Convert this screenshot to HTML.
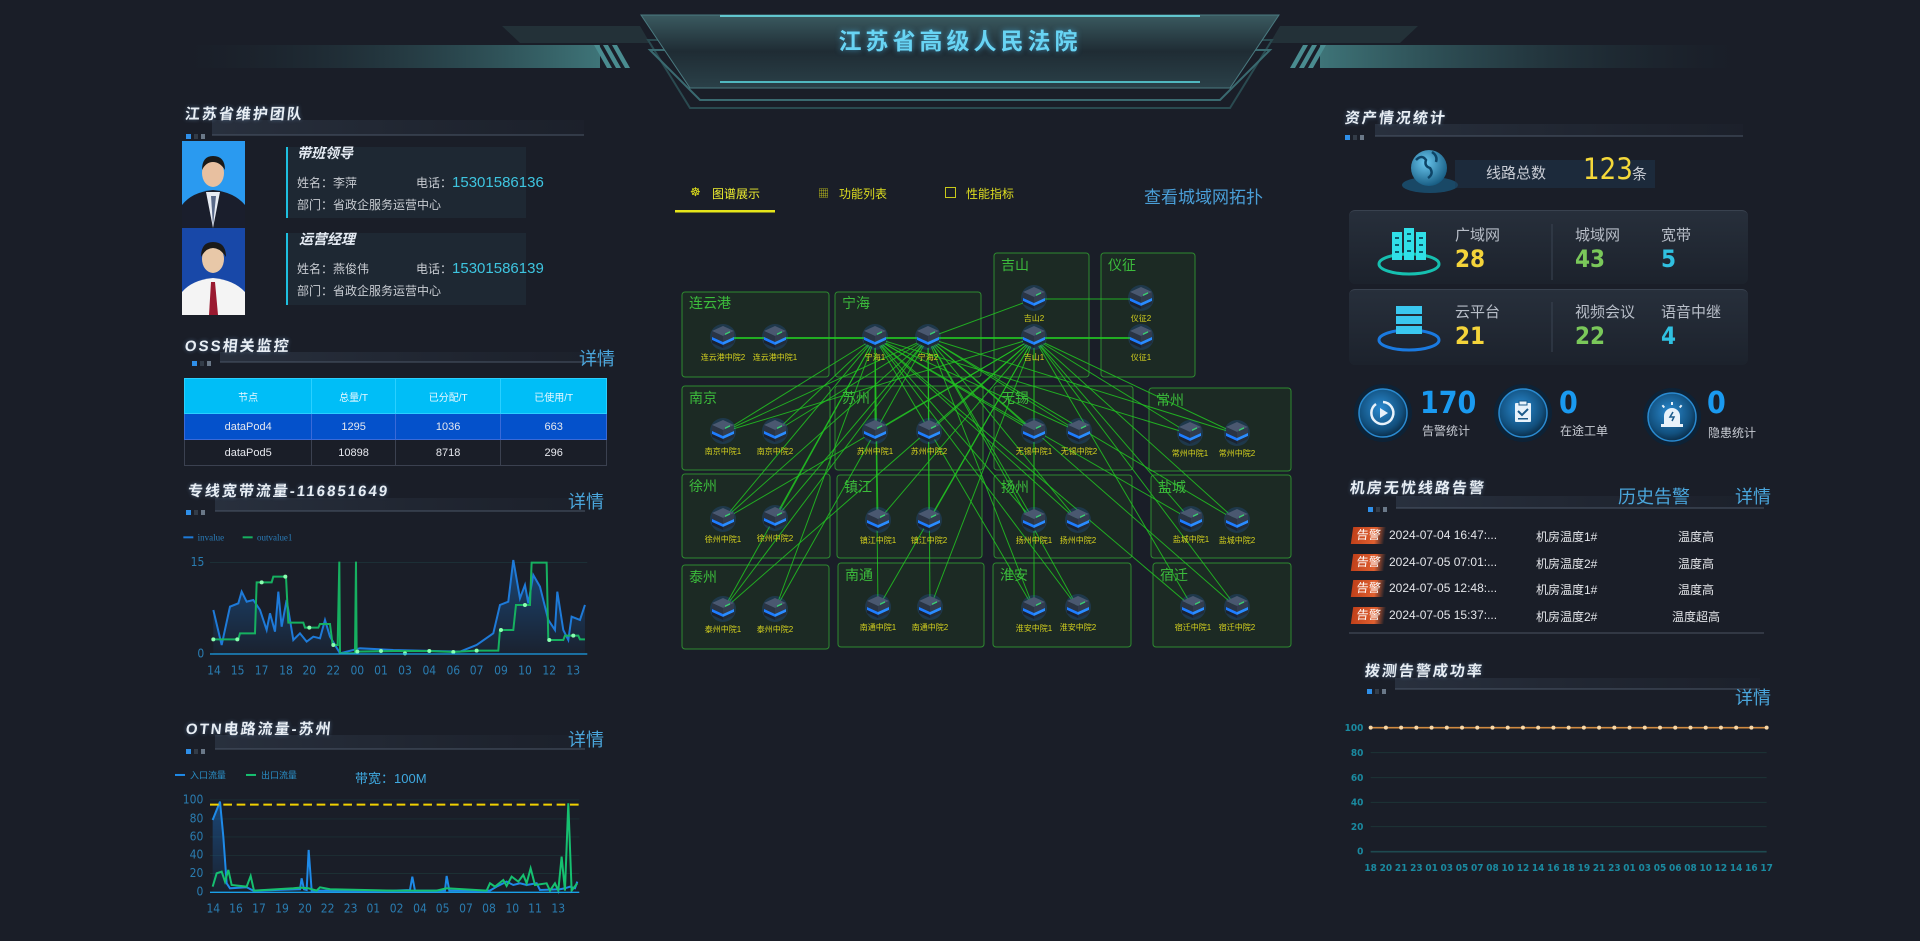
<!DOCTYPE html>
<html><head><meta charset="utf-8">
<style>
*{margin:0;padding:0;box-sizing:border-box}
body{width:1920px;height:941px;background:#1a1e28;overflow:hidden;position:relative;font-family:"Liberation Sans","Noto Sans CJK SC",sans-serif;color:#fff}
.a{position:absolute;white-space:nowrap}
.t{position:absolute;font-weight:bold;font-size:15px;letter-spacing:2px;color:#e8eef4;text-shadow:0 0 4px rgba(150,200,255,.4);transform:skewX(-6deg);white-space:nowrap}
.xq{position:absolute;color:#4aa6dc;font-size:18px;white-space:nowrap}
.lbl{color:#c8ccd2;font-size:12px}
.tb{position:absolute;left:184px;top:378px;width:423px;border-collapse:collapse;font-size:11px;text-align:center}
.tb td{height:26px;border:1px solid #3b4150;color:#e6e8ee}
.tb tr.h td{height:35px;background:#00bef7;border-color:#2ad0ff;color:#e8f8ff;font-size:10px}
.tb tr.r1 td{background:#0451cb;border-color:#3a6ad8}
.card{position:absolute;left:1349px;width:399px;border-radius:6px;background:linear-gradient(180deg,#272f3b,#1c222c);border-top:1px solid #39424f}
.cl{color:#b8bec8;font-size:15px}
.num{font-size:24px;font-weight:bold;font-family:"DejaVu Sans Condensed","Liberation Sans",sans-serif}
.row{position:absolute;left:1352px;width:420px;height:18px;font-size:12px;color:#e4e6ea}
.row span{position:absolute;white-space:nowrap;top:1px}
.bd{position:absolute;left:0;width:33px;height:17px;background:linear-gradient(90deg,#c0401a,#e06030 70%,rgba(224,96,48,0));color:#fff;font-size:12px;line-height:17px;text-align:center;transform:skewX(-8deg);white-space:nowrap}
</style></head><body>
<div class="card" style="top:210px;height:74px"></div>
<div class="card" style="top:289px;height:76px"></div>
<svg class="a" style="left:0;top:0" width="1920" height="941" viewBox="0 0 1920 941">
<defs>
<linearGradient id="lb" x1="0" x2="1"><stop offset="0" stop-color="#1e3038" stop-opacity="0"/><stop offset="1" stop-color="#3e7478"/></linearGradient>
<linearGradient id="rb" x1="1" x2="0"><stop offset="0" stop-color="#1e3038" stop-opacity="0"/><stop offset="1" stop-color="#3e7478"/></linearGradient>
<linearGradient id="hp" x1="0" y1="0" x2="0" y2="1"><stop offset="0" stop-color="#3a5a60"/><stop offset=".5" stop-color="#1f2c34"/><stop offset="1" stop-color="#2a4048"/></linearGradient>
<linearGradient id="ul" x1="0" x2="1"><stop offset="0" stop-color="#2a3240" stop-opacity=".9"/><stop offset="1" stop-color="#232a36" stop-opacity=".2"/></linearGradient>
<linearGradient id="ar1" x1="0" y1="0" x2="0" y2="1"><stop offset="0" stop-color="#1a68b8" stop-opacity=".55"/><stop offset="1" stop-color="#1a68b8" stop-opacity=".05"/></linearGradient>
<radialGradient id="cg" cx=".45" cy=".4" r=".6"><stop offset="0" stop-color="#2a8ad0"/><stop offset=".75" stop-color="#12507e"/><stop offset="1" stop-color="#0b2e4a"/></radialGradient>
<radialGradient id="gl" cx=".4" cy=".35" r=".7"><stop offset="0" stop-color="#6ac8f0"/><stop offset="1" stop-color="#14587e"/></radialGradient>
<symbol id="nd" viewBox="0 0 24 24">
<polygon points="12,1 23,6 12,11 1,6" fill="#4a5870"/>
<polygon points="1,6 12,11 12,17 1,12" fill="#2a3444"/>
<polygon points="23,6 12,11 12,17 23,12" fill="#323c4e"/>
<polygon points="1,12 12,17 12,20 1,15" fill="#1e7cff"/>
<polygon points="23,12 12,17 12,20 23,15" fill="#2a8cff"/>
<polygon points="1,15 12,20 12,23 1,18" fill="#1a2230"/>
<polygon points="23,15 12,20 12,23 23,18" fill="#222c3a"/>
<rect x="14" y="8" width="5" height="1.5" fill="#3ad070" transform="skewY(-25) translate(0,7)"/>
</symbol>
</defs>
<polygon points="502,26 640,26 650,43 520,43" fill="#2c4448" opacity=".5"/>
<polygon points="1418,26 1280,26 1270,43 1400,43" fill="#2c4448" opacity=".5"/>
<rect x="184" y="45" width="416" height="23" fill="url(#lb)"/>
<rect x="1320" y="45" width="420" height="23" fill="url(#rb)"/>
<g fill="#4a8c90"><polygon points="594,45 599,45 612,68 607,68"/><polygon points="603,45 608,45 621,68 616,68"/><polygon points="612,45 617,45 630,68 625,68"/>
<polygon points="1326,45 1321,45 1308,68 1313,68"/><polygon points="1317,45 1312,45 1299,68 1304,68"/><polygon points="1308,45 1303,45 1290,68 1295,68"/></g>
<polygon points="648,40 690,108 1230,108 1272,40" fill="none" stroke="#2a4a50" stroke-width="2"/>
<polygon points="650,50 700,100 1220,100 1270,50" fill="none" stroke="#3a6a70" stroke-width="2"/>
<polygon points="641,15 1279,15 1230,88 690,88" fill="url(#hp)" stroke="#4a7a80"/>
<line x1="720" y1="16" x2="1200" y2="16" stroke="#6ae0e8" stroke-width="2" opacity=".8"/>
<line x1="720" y1="82" x2="1200" y2="82" stroke="#5ad8e0" stroke-width="2" opacity=".8"/>
<g>
<rect x="212" y="120" width="372" height="15" fill="url(#ul)"/><line x1="212" y1="135" x2="584" y2="135" stroke="#4a5566"/>
<rect x="220" y="352" width="390" height="10" fill="url(#ul)"/><line x1="220" y1="362" x2="610" y2="362" stroke="#4a5566"/>
<rect x="215" y="498" width="370" height="13" fill="url(#ul)"/><line x1="215" y1="511" x2="585" y2="511" stroke="#4a5566"/>
<rect x="215" y="735" width="370" height="14" fill="url(#ul)"/><line x1="215" y1="749" x2="585" y2="749" stroke="#4a5566"/>
<rect x="1375" y="124" width="368" height="12" fill="url(#ul)"/><line x1="1375" y1="136" x2="1743" y2="136" stroke="#4a5566"/>
<rect x="1396" y="496" width="368" height="12" fill="url(#ul)"/><line x1="1396" y1="508" x2="1764" y2="508" stroke="#4a5566"/>
<rect x="1395" y="678" width="365" height="11" fill="url(#ul)"/><line x1="1395" y1="689" x2="1760" y2="689" stroke="#4a5566"/>
</g>
<g>
<g transform="translate(186,134)"><rect width="5" height="5" fill="#2f8fe8"/><rect x="8" width="4" height="5" fill="#333c48"/><rect x="15" width="4" height="5" fill="#6a7888"/></g>
<g transform="translate(192,361)"><rect width="5" height="5" fill="#2f8fe8"/><rect x="8" width="4" height="5" fill="#333c48"/><rect x="15" width="4" height="5" fill="#6a7888"/></g>
<g transform="translate(186,510)"><rect width="5" height="5" fill="#2f8fe8"/><rect x="8" width="4" height="5" fill="#333c48"/><rect x="15" width="4" height="5" fill="#6a7888"/></g>
<g transform="translate(186,749)"><rect width="5" height="5" fill="#2f8fe8"/><rect x="8" width="4" height="5" fill="#333c48"/><rect x="15" width="4" height="5" fill="#6a7888"/></g>
<g transform="translate(1345,135)"><rect width="5" height="5" fill="#2f8fe8"/><rect x="8" width="4" height="5" fill="#333c48"/><rect x="15" width="4" height="5" fill="#6a7888"/></g>
<g transform="translate(1368,507)"><rect width="5" height="5" fill="#2f8fe8"/><rect x="8" width="4" height="5" fill="#333c48"/><rect x="15" width="4" height="5" fill="#6a7888"/></g>
<g transform="translate(1367,689)"><rect width="5" height="5" fill="#2f8fe8"/><rect x="8" width="4" height="5" fill="#333c48"/><rect x="15" width="4" height="5" fill="#6a7888"/></g>
</g>
<rect x="182" y="141" width="63" height="87" fill="#2a9af0"/>
<path d="M182,205 Q192,192 213,190 Q234,192 245,205 L245,228 L182,228Z" fill="#1a1e2c"/>
<path d="M206,192 L213,228 L220,192Z" fill="#e8ecf4"/><path d="M211,196 L213,226 L216,196Z" fill="#5a6a8a"/>
<ellipse cx="213" cy="173" rx="11" ry="14" fill="#e8c0a0"/><path d="M202,170 Q202,156 213,156 Q225,156 225,170 Q220,162 213,162 Q206,162 202,170Z" fill="#1a1a1a"/>
<rect x="182" y="228" width="63" height="87" fill="#1848a8"/>
<path d="M182,292 Q192,280 213,278 Q234,280 245,292 L245,315 L182,315Z" fill="#f4f4f4"/>
<path d="M211,282 L209,315 L218,315 L215,282Z" fill="#9a1a30"/>
<ellipse cx="213" cy="259" rx="11" ry="14" fill="#e8c8a8"/><path d="M201,257 Q201,242 213,242 Q226,242 226,257 Q220,248 213,248 Q206,248 201,257Z" fill="#1a1a1a"/>
<rect x="286" y="147" width="240" height="71" fill="#1f2a36" opacity=".8"/><rect x="286" y="147" width="2" height="71" fill="#1ec0e0"/>
<rect x="286" y="233" width="240" height="72" fill="#1f2a36" opacity=".8"/><rect x="286" y="233" width="2" height="72" fill="#1ec0e0"/>
<g transform="translate(160,470) scale(0.3333)">
<line x1="150" y1="277" x2="1282" y2="277" stroke="#1f3a3e" stroke-width="2"/>
<polygon fill="url(#ar1)" points="160,420 185,525 210,410 235,400 245,365 260,395 280,390 300,420 320,480 330,430 345,485 355,365 365,470 380,390 400,510 420,490 440,515 460,500 480,505 495,450 510,500 540,550 600,535 700,540 900,545 950,525 1000,490 1020,405 1045,395 1060,270 1080,385 1095,345 1105,400 1120,315 1140,350 1165,450 1185,480 1192,365 1210,480 1225,510 1235,440 1260,450 1275,405 1275,552 160,552"/>
<polyline fill="none" stroke="#1e7ad8" stroke-width="6" points="160,420 185,525 210,410 235,400 245,365 260,395 280,390 300,420 320,480 330,430 345,485 355,365 365,470 380,390 400,510 420,490 440,515 460,500 480,505 495,450 510,500 540,550 600,535 700,540 900,545 950,525 1000,490 1020,405 1045,395 1060,270 1080,385 1095,345 1105,400 1120,315 1140,350 1165,450 1185,480 1192,365 1210,480 1225,510 1235,440 1260,450 1275,405"/>
<polyline fill="none" stroke="#16b060" stroke-width="6" points="160,508 235,508 240,490 285,490 290,337 335,337 340,320 378,320 385,458 430,458 435,473 475,473 480,462 510,462 518,525 533,525 538,275 540,550 585,550 588,275 590,545 700,543 810,543 880,546 950,542 1015,542 1020,480 1060,480 1068,405 1110,405 1115,278 1160,278 1165,510 1210,510 1215,497 1255,497 1260,508 1275,508"/>
<g fill="#8affb0"><circle cx="160" cy="508" r="6"/><circle cx="232" cy="508" r="6"/><circle cx="305" cy="337" r="6"/><circle cx="376" cy="320" r="6"/><circle cx="448" cy="473" r="6"/><circle cx="520" cy="525" r="6"/><circle cx="592" cy="545" r="6"/><circle cx="663" cy="543" r="6"/><circle cx="735" cy="550" r="6"/><circle cx="808" cy="543" r="6"/><circle cx="880" cy="546" r="6"/><circle cx="950" cy="542" r="6"/><circle cx="1023" cy="480" r="6"/><circle cx="1095" cy="405" r="6"/><circle cx="1168" cy="510" r="6"/><circle cx="1240" cy="497" r="6"/></g>
<line x1="150" y1="552" x2="1282" y2="552" stroke="#1aa0e8" stroke-width="4"/>
<g fill="#2a7cb0" font-size="36" font-family="DejaVu Sans Condensed,Liberation Sans,sans-serif"><text x="92" y="288">15</text><text x="112" y="563">0</text>
<g text-anchor="middle"><text x="162" y="614">14</text><text x="233" y="614">15</text><text x="305" y="614">17</text><text x="378" y="614">18</text><text x="448" y="614">20</text><text x="520" y="614">22</text><text x="592" y="614">00</text><text x="663" y="614">01</text><text x="735" y="614">03</text><text x="808" y="614">04</text><text x="880" y="614">06</text><text x="950" y="614">07</text><text x="1023" y="614">09</text><text x="1095" y="614">10</text><text x="1168" y="614">12</text><text x="1240" y="614">13</text></g></g>
<line x1="70" y1="202" x2="100" y2="202" stroke="#1e7ad8" stroke-width="6"/><line x1="248" y1="202" x2="278" y2="202" stroke="#16b060" stroke-width="6"/>
<g fill="#2a7cb8" font-size="27" font-family="Liberation Serif,serif"><text x="113" y="212">invalue</text><text x="291" y="212">outvalue1</text></g>
</g>
<g transform="translate(160,470) scale(0.3333)">
<g stroke="#1d3638" stroke-width="2"><line x1="150" y1="990" x2="1258" y2="990"/><line x1="150" y1="1047" x2="1258" y2="1047"/><line x1="150" y1="1101" x2="1258" y2="1101"/><line x1="150" y1="1156" x2="1258" y2="1156"/><line x1="150" y1="1211" x2="1258" y2="1211"/></g>
<polygon fill="url(#ar1)" points="158,1050 180,995 190,1100 200,1240 210,1255 210,1267 158,1267"/>
<polyline fill="none" stroke="#1e8ae8" stroke-width="6" points="158,1050 180,995 190,1100 200,1240 210,1255 260,1252 280,1262 420,1258 425,1225 432,1258 440,1260 446,1140 455,1262 700,1262 750,1260 757,1220 765,1262 855,1262 860,1218 868,1262 990,1262 1010,1250 1040,1235 1060,1245 1080,1240 1100,1245 1130,1240 1140,1260 1200,1258 1215,1255 1230,1250 1245,1255 1252,1235"/>
<polyline fill="none" stroke="#16c070" stroke-width="6" points="158,1250 170,1210 185,1205 195,1235 205,1200 215,1245 260,1250 272,1218 282,1262 400,1255 420,1253 445,1255 470,1262 480,1252 510,1258 700,1262 830,1262 860,1255 980,1262 990,1240 1005,1250 1030,1230 1040,1248 1055,1220 1075,1235 1090,1215 1100,1240 1112,1195 1125,1245 1160,1240 1170,1262 1185,1240 1195,1262 1205,1160 1215,1262 1225,1000 1235,1262 1252,1240"/>
<line x1="150" y1="1004" x2="1258" y2="1004" stroke="#f0d000" stroke-width="6" stroke-dasharray="26,14"/>
<line x1="150" y1="1267" x2="1258" y2="1267" stroke="#1aa0e8" stroke-width="4"/>
<g fill="#2a7cb0" font-size="36" font-family="DejaVu Sans Condensed,Liberation Sans,sans-serif"><g text-anchor="end"><text x="130" y="1000">100</text><text x="130" y="1057">80</text><text x="130" y="1111">60</text><text x="130" y="1166">40</text><text x="130" y="1221">20</text><text x="130" y="1277">0</text></g>
<g text-anchor="middle"><text x="160" y="1328">14</text><text x="228" y="1328">16</text><text x="297" y="1328">17</text><text x="366" y="1328">19</text><text x="435" y="1328">20</text><text x="503" y="1328">22</text><text x="572" y="1328">23</text><text x="640" y="1328">01</text><text x="710" y="1328">02</text><text x="780" y="1328">04</text><text x="848" y="1328">05</text><text x="918" y="1328">07</text><text x="987" y="1328">08</text><text x="1057" y="1328">10</text><text x="1125" y="1328">11</text><text x="1195" y="1328">13</text></g></g>
<line x1="45" y1="915" x2="75" y2="915" stroke="#1e8ae8" stroke-width="6"/><line x1="258" y1="915" x2="288" y2="915" stroke="#16c070" stroke-width="6"/>
<g fill="#2a90c8" font-size="27"><text x="90" y="925">入口流量</text><text x="303" y="925">出口流量</text></g>
</g>
<g transform="translate(1330,650) scale(0.3333)">
<g stroke="#1d3436" stroke-width="3"><line x1="122" y1="308" x2="1310" y2="308"/><line x1="122" y1="383" x2="1310" y2="383"/><line x1="122" y1="457" x2="1310" y2="457"/><line x1="122" y1="530" x2="1310" y2="530"/></g>
<line x1="122" y1="605" x2="1310" y2="605" stroke="#1e4a50" stroke-width="5"/>
<line x1="122" y1="233" x2="1310" y2="233" stroke="#d08a40" stroke-width="5"/>
<g id="pts" fill="#f8d8a8"></g>
<g fill="#1a8aa0" font-size="30" font-weight="bold" font-family="DejaVu Sans Condensed,Liberation Sans,sans-serif"><g text-anchor="end"><text x="100" y="243">100</text><text x="100" y="318">80</text><text x="100" y="393">60</text><text x="100" y="467">40</text><text x="100" y="540">20</text><text x="100" y="613">0</text></g>
<g id="xl" text-anchor="middle"></g></g>
</g>
<g fill="#1d2b24" fill-opacity=".9" stroke="#2e8a30" stroke-width="1">
<rect x="682" y="292" width="147" height="85" rx="3"/><rect x="835" y="292" width="146" height="85" rx="3"/>
<rect x="994" y="253" width="95" height="124" rx="3"/><rect x="1101" y="253" width="94" height="124" rx="3"/>
<rect x="682" y="386" width="148" height="84" rx="3"/><rect x="835" y="386" width="148" height="84" rx="3"/><rect x="994" y="386" width="139" height="84" rx="3"/><rect x="1149" y="388" width="142" height="83" rx="3"/>
<rect x="682" y="474" width="148" height="84" rx="3"/><rect x="837" y="475" width="145" height="83" rx="3"/><rect x="994" y="475" width="138" height="83" rx="3"/><rect x="1151" y="475" width="140" height="83" rx="3"/>
<rect x="682" y="565" width="147" height="84" rx="3"/><rect x="838" y="563" width="146" height="84" rx="3"/><rect x="993" y="563" width="138" height="84" rx="3"/><rect x="1153" y="563" width="138" height="84" rx="3"/>
</g>
<g id="edges" stroke="#22c422" stroke-width="1" stroke-opacity=".85">
<line x1="723" y1="338" x2="1141" y2="338" stroke-width="2"/><line x1="1034" y1="299" x2="1141" y2="299"/><line x1="928" y1="338" x2="1034" y2="299"/>
</g>
<g id="nodes"></g>
<g fill="#3cbc3c" font-size="14"><text x="689" y="308">连云港</text><text x="842" y="308">宁海</text><text x="1001" y="270">吉山</text><text x="1108" y="270">仪征</text>
<text x="689" y="403">南京</text><text x="842" y="403">苏州</text><text x="1001" y="403">无锡</text><text x="1156" y="405">常州</text>
<text x="689" y="491">徐州</text><text x="844" y="492">镇江</text><text x="1001" y="492">扬州</text><text x="1158" y="492">盐城</text>
<text x="689" y="582">泰州</text><text x="845" y="580">南通</text><text x="1000" y="580">淮安</text><text x="1160" y="580">宿迁</text></g>
<g id="nl" fill="#d6d21e" font-size="8" text-anchor="middle"></g>
<ellipse cx="1430" cy="185" rx="28" ry="8" fill="#1a5a80" opacity=".7"/>
<circle cx="1429" cy="168" r="18" fill="url(#gl)"/><path d="M1416,160 q6,-6 10,0 q-2,6 4,8 q4,6 -2,10 M1432,152 q6,4 4,10" stroke="#0e4466" stroke-width="2.5" fill="none"/>
<rect x="1455" y="160" width="200" height="28" fill="#1f3a52" opacity=".45"/>
<ellipse cx="1409" cy="264" rx="30" ry="10" fill="none" stroke="#16c0b0" stroke-width="3"/>
<g fill="#30e0e8"><rect x="1392" y="232" width="10" height="28"/><rect x="1404" y="228" width="10" height="32"/><rect x="1416" y="232" width="10" height="28"/></g>
<g fill="#0a5a6a"><rect x="1395" y="237" width="4" height="2"/><rect x="1407" y="233" width="4" height="2"/><rect x="1419" y="237" width="4" height="2"/><rect x="1395" y="244" width="4" height="2"/><rect x="1407" y="240" width="4" height="2"/><rect x="1419" y="244" width="4" height="2"/><rect x="1395" y="251" width="4" height="2"/><rect x="1407" y="250" width="4" height="2"/><rect x="1419" y="251" width="4" height="2"/></g>
<ellipse cx="1409" cy="340" rx="30" ry="10" fill="none" stroke="#1a7ae0" stroke-width="3"/>
<g fill="#3ac8f0"><rect x="1396" y="306" width="26" height="8"/><rect x="1396" y="316" width="26" height="8"/><rect x="1396" y="326" width="26" height="8"/></g>
<line x1="1552" y1="224" x2="1552" y2="280" stroke="#3a4452"/><line x1="1552" y1="302" x2="1552" y2="352" stroke="#3a4452"/>
<g>
<circle cx="1383" cy="413" r="29" fill="#0d2236"/><circle cx="1383" cy="413" r="24" fill="url(#cg)" stroke="#2a8ad0" stroke-width="1.5"/>
<path d="M1376,404 A11,11 0 1 0 1383,402" fill="none" stroke="#e8f2fa" stroke-width="2.5"/><polygon points="1380,408 1388,413 1380,418" fill="#e8f2fa"/>
<circle cx="1523" cy="413" r="29" fill="#0d2236"/><circle cx="1523" cy="413" r="24" fill="url(#cg)" stroke="#2a8ad0" stroke-width="1.5"/>
<rect x="1515" y="403" width="16" height="19" rx="1" fill="#e8f2fa"/><rect x="1519" y="401" width="8" height="4" fill="#e8f2fa" stroke="#1a5a8a"/><path d="M1518,411 l4,4 l6,-6" stroke="#1a5a8a" stroke-width="2" fill="none"/><rect x="1518" y="418" width="10" height="1.5" fill="#1a5a8a"/>
<circle cx="1672" cy="417" r="29" fill="#0d2236"/><circle cx="1672" cy="417" r="24" fill="url(#cg)" stroke="#2a8ad0" stroke-width="1.5"/>
<path d="M1664,424 v-8 a8,8 0 0 1 16,0 v8z" fill="#e8f2fa"/><rect x="1661" y="424" width="22" height="3" fill="#e8f2fa"/><path d="M1673,412 l-3,5 h4 l-2,4" stroke="#1a5a8a" stroke-width="1.5" fill="none"/>
<g fill="#e8f2fa"><rect x="1671" y="402" width="2" height="3"/><rect x="1662" y="405" width="2" height="3" transform="rotate(-40 1663 406)"/><rect x="1680" y="405" width="2" height="3" transform="rotate(40 1681 406)"/></g>
</g>
<line x1="1349" y1="633" x2="1764" y2="633" stroke="#4a5260"/>
<rect x="675" y="210" width="100" height="2.5" fill="#e6e61a"/>
</svg>

<div class="a" style="left:0;top:22px;width:1920px;text-align:center;font-size:23px;font-weight:bold;letter-spacing:4px;color:#68d4f4;text-shadow:0 0 6px rgba(80,200,255,.6)">江苏省高级人民法院</div>

<div class="t" style="left:185px;top:103px">江苏省维护团队</div>
<div class="a" style="left:297px;top:143px;font-size:14px;font-weight:bold;font-style:italic;color:#e6ecf4">带班领导</div>
<div class="a lbl" style="left:297px;top:174px">姓名：李萍</div>
<div class="a lbl" style="left:416px;top:174px">电话：<span style="color:#3ec5e0;font-size:15px">15301586136</span></div>
<div class="a lbl" style="left:297px;top:196px">部门：省政企服务运营中心</div>
<div class="a" style="left:299px;top:229px;font-size:14px;font-weight:bold;font-style:italic;color:#e6ecf4">运营经理</div>
<div class="a lbl" style="left:297px;top:260px">姓名：燕俊伟</div>
<div class="a lbl" style="left:416px;top:260px">电话：<span style="color:#3ec5e0;font-size:15px">15301586139</span></div>
<div class="a lbl" style="left:297px;top:282px">部门：省政企服务运营中心</div>

<div class="t" style="left:185px;top:335px">OSS相关监控</div>
<div class="xq" style="left:579px;top:345px">详情</div>
<table class="tb"><tr class="h"><td>节点</td><td>总量/T</td><td>已分配/T</td><td>已使用/T</td></tr>
<tr class="r1"><td>dataPod4</td><td>1295</td><td>1036</td><td>663</td></tr>
<tr><td>dataPod5</td><td>10898</td><td>8718</td><td>296</td></tr></table>

<div class="t" style="left:188px;top:480px">专线宽带流量-116851649</div>
<div class="xq" style="left:568px;top:488px">详情</div>
<div class="t" style="left:186px;top:718px">OTN电路流量-苏州</div>
<div class="xq" style="left:568px;top:726px">详情</div>
<div class="a" style="left:355px;top:768px;font-size:13px;color:#3fa9e0">带宽：100M</div>

<div class="a" style="left:690px;top:185px;font-size:12px;color:#e6e61a">&#x2638;&#xFE0E;</div>
<div class="a" style="left:712px;top:185px;font-size:12px;color:#eeee30">图谱展示</div>
<div class="a" style="left:818px;top:185px;font-size:11px;color:#c8c81a">▦</div>
<div class="a" style="left:839px;top:185px;font-size:12px;color:#dede20">功能列表</div>
<div class="a" style="left:945px;top:185px;width:11px;height:11px;border:1px solid #c8c81a;margin-top:2px"></div>
<div class="a" style="left:966px;top:185px;font-size:12px;color:#dede20">性能指标</div>
<div class="a" style="left:1144px;top:183px;font-size:17px;color:#4a9fd8">查看城域网拓扑</div>

<div class="t" style="left:1345px;top:107px">资产情况统计</div>
<div class="a" style="left:1486px;top:162px;font-size:15px;color:#c8ccd4">线路总数</div>
<div class="a" style="left:1583px;top:152px;font-size:29px;color:#f4d83a;font-family:'DejaVu Sans Condensed',sans-serif">123</div>
<div class="a" style="left:1632px;top:163px;font-size:15px;color:#c8ccd4">条</div>
<div class="a cl" style="left:1455px;top:224px">广域网</div><div class="a num" style="left:1455px;top:245px;color:#f4d43a">28</div>
<div class="a cl" style="left:1575px;top:224px">城域网</div><div class="a num" style="left:1575px;top:245px;color:#7ac85a">43</div>
<div class="a cl" style="left:1661px;top:224px">宽带</div><div class="a num" style="left:1661px;top:245px;color:#30c0e0">5</div>
<div class="a cl" style="left:1455px;top:301px">云平台</div><div class="a num" style="left:1455px;top:322px;color:#f4d43a">21</div>
<div class="a cl" style="left:1575px;top:301px">视频会议</div><div class="a num" style="left:1575px;top:322px;color:#7ac85a">22</div>
<div class="a cl" style="left:1661px;top:301px">语音中继</div><div class="a num" style="left:1661px;top:322px;color:#30c0e0">4</div>
<div class="a" style="left:1420px;top:386px;font-size:30px;font-weight:bold;color:#1a9af0;font-family:'DejaVu Sans Condensed',sans-serif">170</div>
<div class="a" style="left:1422px;top:422px;font-size:12px;color:#c8ccd4">告警统计</div>
<div class="a" style="left:1559px;top:386px;font-size:30px;font-weight:bold;color:#1a9af0;font-family:'DejaVu Sans Condensed',sans-serif">0</div>
<div class="a" style="left:1560px;top:422px;font-size:12px;color:#c8ccd4">在途工单</div>
<div class="a" style="left:1707px;top:386px;font-size:30px;font-weight:bold;color:#1a9af0;font-family:'DejaVu Sans Condensed',sans-serif">0</div>
<div class="a" style="left:1708px;top:424px;font-size:12px;color:#c8ccd4">隐患统计</div>

<div class="t" style="left:1350px;top:477px">机房无忧线路告警</div>
<div class="xq" style="left:1618px;top:483px">历史告警</div>
<div class="xq" style="left:1735px;top:483px">详情</div>
<div class="row" style="top:527px"><div class="bd">告警</div><span style="left:37px">2024-07-04 16:47:...</span><span style="left:184px">机房温度1#</span><span style="left:326px">温度高</span></div>
<div class="row" style="top:554px"><div class="bd">告警</div><span style="left:37px">2024-07-05 07:01:...</span><span style="left:184px">机房温度2#</span><span style="left:326px">温度高</span></div>
<div class="row" style="top:580px"><div class="bd">告警</div><span style="left:37px">2024-07-05 12:48:...</span><span style="left:184px">机房温度1#</span><span style="left:326px">温度高</span></div>
<div class="row" style="top:607px"><div class="bd">告警</div><span style="left:37px">2024-07-05 15:37:...</span><span style="left:184px">机房温度2#</span><span style="left:320px">温度超高</span></div>

<div class="t" style="left:1365px;top:660px">拨测告警成功率</div>
<div class="xq" style="left:1735px;top:684px">详情</div>

<script>
var NS="http://www.w3.org/2000/svg";
function el(t,a,p){var e=document.createElementNS(NS,t);for(var k in a)e.setAttribute(k,a[k]);p.appendChild(e);return e;}
var pts=document.getElementById('pts'),xl=document.getElementById('xl');
var L="18 20 21 23 01 03 05 07 08 10 12 14 16 18 19 21 23 01 03 05 06 08 10 12 14 16 17".split(" ");
for(var i=0;i<27;i++){var x=122+i*1188/26;el('circle',{cx:x,cy:233,r:6},pts);var t=el('text',{x:x,y:663},xl);t.textContent=L[i];}
var N=[["连云港中院2",723,338],["连云港中院1",775,338],["宁海1",875,338],["宁海2",928,338],["吉山2",1034,299],["吉山1",1034,338],["仪征2",1141,299],["仪征1",1141,338],
["南京中院1",723,432],["南京中院2",775,432],["苏州中院1",875,432],["苏州中院2",929,432],["无锡中院1",1034,432],["无锡中院2",1079,432],["常州中院1",1190,434],["常州中院2",1237,434],
["徐州中院1",723,520],["徐州中院2",775,519],["镇江中院1",878,521],["镇江中院2",929,521],["扬州中院1",1034,521],["扬州中院2",1078,521],["盐城中院1",1191,520],["盐城中院2",1237,521],
["泰州中院1",723,610],["泰州中院2",775,610],["南通中院1",878,608],["南通中院2",930,608],["淮安中院1",1034,609],["淮安中院2",1078,608],["宿迁中院1",1193,608],["宿迁中院2",1237,608]];
var E=document.getElementById('edges'),ND=document.getElementById('nodes'),NL=document.getElementById('nl');
var hubs=[[875,338],[928,338],[1034,338]];
for(var j=8;j<N.length;j++){for(var h=0;h<3;h++){if((j+h)%4==3)continue;el('line',{x1:hubs[h][0],y1:hubs[h][1],x2:N[j][1],y2:N[j][2]},E);}}
for(var j=0;j<N.length;j++){var n=N[j];el('circle',{cx:n[1],cy:n[2]-1,r:13,fill:"#2a7aff",opacity:.18},ND);el('use',{href:"#nd",x:n[1]-12,y:n[2]-13,width:24,height:24},ND);var t=el('text',{x:n[1],y:n[2]+22},NL);t.textContent=n[0];}
</script>
</body></html>
